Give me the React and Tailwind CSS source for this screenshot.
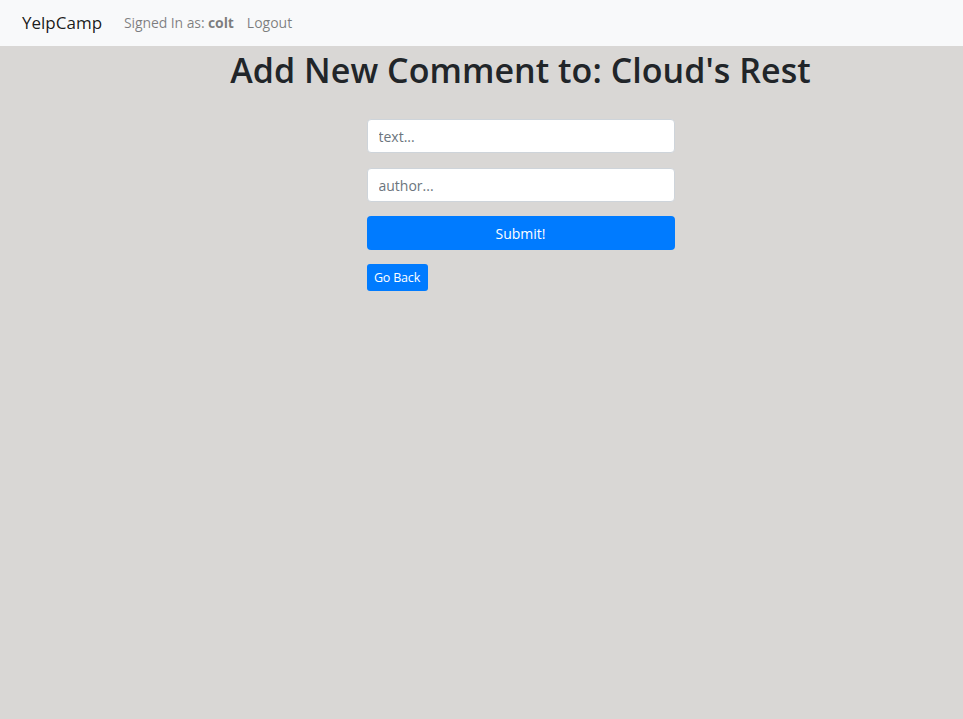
export default function App() {
  return (
    <div className="min-h-[719px] bg-[#d9d7d5] font-['Open_Sans',sans-serif] text-[#212529]">
      <nav className="h-[46px] bg-[#f8f9fa] flex items-center px-[22px] pb-[1px]">
        <a className="text-[17px] text-black/90 mr-[22px]">YelpCamp</a>
        <span className="text-[14px] text-black/50 mr-[13px] tracking-[-0.1px]">
          Signed In as: <b className="font-bold">colt</b>
        </span>
        <a className="text-[14px] text-black/50">Logout</a>
      </nav>

      <div className="pl-[78px] flex flex-col items-center">
        <h1 className="text-[34px] leading-[46px] font-semibold mt-[1px] mb-[26px] tracking-[0.05px]">
          Add New Comment to: Cloud's Rest
        </h1>
        <form className="w-[308px] flex flex-col">
          <input
            className="h-[34px] bg-white border border-[#ced4da] rounded-[4px] px-[11px] text-[14px] placeholder:text-[#6c757d] outline-none mb-[15px]"
            placeholder="text..."
          />
          <input
            className="h-[34px] bg-white border border-[#ced4da] rounded-[4px] px-[11px] text-[14px] placeholder:text-[#6c757d] outline-none mb-[14px]"
            placeholder="author..."
          />
          <button
            type="button"
            className="h-[34px] bg-[#007bff] text-white rounded-[4px] text-[14px] mb-[14px]"
          >
            Submit!
          </button>
          <a className="self-start w-[61px] h-[27px] pt-[2px] flex items-center justify-center bg-[#007bff] text-white rounded-[3px] text-[12.5px] tracking-[-0.2px]">
            Go Back
          </a>
        </form>
      </div>
    </div>
  );
}
